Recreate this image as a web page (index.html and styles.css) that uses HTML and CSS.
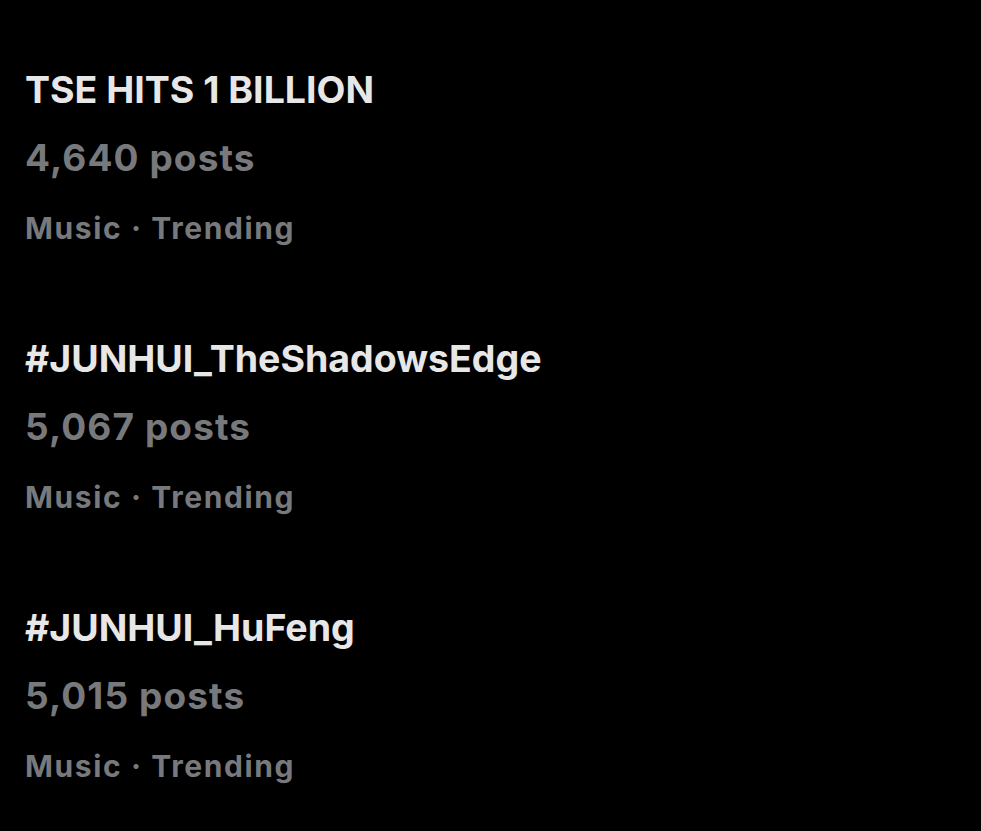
FILE: index.html
```html
<!DOCTYPE html>
<html lang="en">
<head>
  <meta charset="UTF-8">
  <meta name="viewport" content="width=device-width, initial-scale=1.0">
  <title>Trending</title>
  <link rel="stylesheet" href="styles.css">
</head>
<body>
  <div class="trends">
    <div class="trend">
      <div class="trend-title">TSE HITS 1 BILLION</div>
      <div class="trend-count">4,640 posts</div>
      <div class="trend-meta">Music · Trending</div>
    </div>

    <div class="trend">
      <div class="trend-title">#JUNHUI_TheShadowsEdge</div>
      <div class="trend-count">5,067 posts</div>
      <div class="trend-meta">Music · Trending</div>
    </div>

    <div class="trend">
      <div class="trend-title">#JUNHUI_HuFeng</div>
      <div class="trend-count">5,015 posts</div>
      <div class="trend-meta">Music · Trending</div>
    </div>
  </div>
</body>
</html>
```

FILE: styles.css
```css
body {
  margin: 0;
  padding: 0;
  background-color: #000;
  font-family: Inter, "Liberation Sans", sans-serif;
  font-weight: 700;
}
.trends {
  display: flex;
  flex-direction: column;
  gap: 61px;
  padding: 56px 0 0 25px;
}
.trend-title {
  color: #e7e7e8;
  font-size: 37.5px;
  line-height: 68px;
}
.trend-count {
  color: #77797c;
  font-size: 37px;
  line-height: 68px;
  letter-spacing: 1.1px;
}
.trend-meta {
  color: #77797c;
  font-size: 30px;
  line-height: 72px;
  letter-spacing: 1.6px;
}
```
